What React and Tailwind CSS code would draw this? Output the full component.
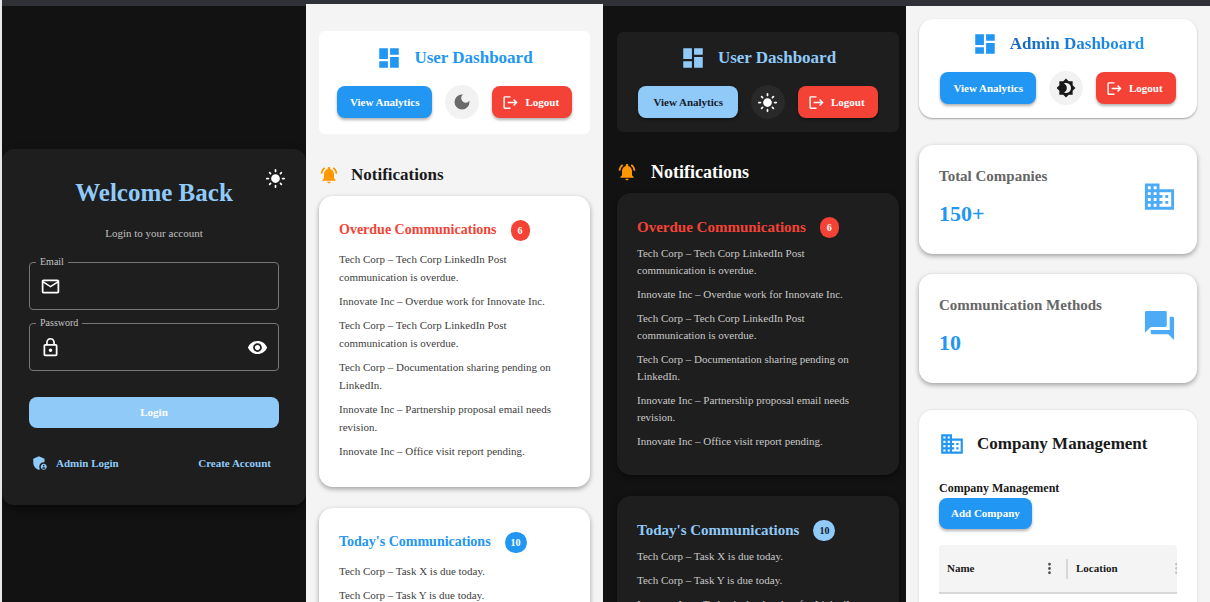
import {
  MdAdminPanelSettings,
  MdBrightness4,
  MdBusiness,
  MdDarkMode,
  MdDashboard,
  MdLightMode,
  MdLockOutline,
  MdLogout,
  MdMoreVert,
  MdNotificationsActive,
  MdOutlineEmail,
  MdQuestionAnswer,
  MdVisibility,
} from "react-icons/md";

const overdue = [
  "Tech Corp – Tech Corp LinkedIn Post communication is overdue.",
  "Innovate Inc – Overdue work for Innovate Inc.",
  "Tech Corp – Tech Corp LinkedIn Post communication is overdue.",
  "Tech Corp – Documentation sharing pending on LinkedIn.",
  "Innovate Inc – Partnership proposal email needs revision.",
  "Innovate Inc – Office visit report pending.",
];

const today = ["Tech Corp – Task X is due today.", "Tech Corp – Task Y is due today."];

function Field({ id, label, type, icon, action }) {
  return (
    <fieldset className="h-[55px] min-w-0 rounded border border-[#777] px-1.5">
      <legend className="h-3.5 px-1 text-[10px] leading-3.5 text-[#c4c4c4]">
        <label htmlFor={id}>{label}</label>
      </legend>
      <div className="flex h-[34px] items-center gap-2 px-1 text-white">
        {icon}
        <input id={id} type={type} className="min-w-0 flex-1 bg-transparent text-sm outline-none" />
        {action}
      </div>
    </fieldset>
  );
}

function Login() {
  return (
    <section className="overflow-hidden border-t-[6px] border-[#303136] bg-[#121212] pt-[143px]">
      <form className="relative rounded-xl bg-[#1e1e1e] px-[27px] pt-7 pb-8 shadow-[0_4px_10px_rgba(0,0,0,0.5)]">
        <button type="button" aria-label="Light mode" className="absolute top-[19px] right-5 text-white">
          <MdLightMode size={21} />
        </button>
        <h1 className="text-center text-[25px] leading-8 font-bold text-[#90caf9]">Welcome Back</h1>
        <p className="mt-3.5 text-center text-[11px] leading-5 text-[#c0c0c0]">Login to your account</p>
        <div className="mt-3 flex flex-col gap-1.5">
          <Field id="email" label="Email" type="email" icon={<MdOutlineEmail size={21} />} />
          <Field
            id="password"
            label="Password"
            type="password"
            icon={<MdLockOutline size={21} />}
            action={
              <button type="button" aria-label="Show password">
                <MdVisibility size={21} />
              </button>
            }
          />
        </div>
        <button
          type="button"
          className="mt-[26px] h-[31px] w-full rounded-lg bg-[#90caf9] text-[11px] font-bold text-white"
        >
          Login
        </button>
        <div className="mt-[25px] flex h-5 items-center justify-between pr-2 pl-0.5 text-[11px] font-bold text-[#90caf9]">
          <a href="#admin" className="flex items-center gap-[7px]">
            <MdAdminPanelSettings size={18} />
            Admin Login
          </a>
          <a href="#create">Create Account</a>
        </div>
      </form>
    </section>
  );
}

function Header({ title, titleClass, iconClass, cardClass, buttonClass, toggleClass, toggleIcon }) {
  return (
    <header className={cardClass}>
      <div className="flex h-7 items-center justify-center gap-3">
        <MdDashboard size={26} className={iconClass} />
        <h2 className={titleClass}>{title}</h2>
      </div>
      <div className="mt-[13px] flex items-center justify-center gap-[13px]">
        <button
          type="button"
          className={`h-8 rounded-lg text-[11px] font-bold whitespace-nowrap shadow-[0_2px_3px_rgba(0,0,0,0.3)] ${buttonClass}`}
        >
          View Analytics
        </button>
        <button
          type="button"
          aria-label="Toggle theme"
          className={`flex size-[34px] items-center justify-center rounded-full ${toggleClass}`}
        >
          {toggleIcon}
        </button>
        <button
          type="button"
          className="flex h-8 items-center gap-1.5 rounded-lg bg-[#f44336] pr-[13px] pl-2.5 text-[11px] font-bold text-white shadow-[0_2px_3px_rgba(0,0,0,0.3)]"
        >
          <MdLogout size={17} />
          Logout
        </button>
      </div>
    </header>
  );
}

function Notice({ title, count, items, className, titleClass, badgeClass, listClass }) {
  return (
    <article className={`rounded-[14px] px-5 pt-5 ${className}`}>
      <div className="flex h-7 items-center gap-3.5">
        <h4 className={`font-bold whitespace-nowrap ${titleClass}`}>{title}</h4>
        <span
          className={`flex h-[21px] min-w-[19px] items-center justify-center rounded-full px-1.5 text-[10px] font-bold ${badgeClass}`}
        >
          {count}
        </span>
      </div>
      <ul className={`flex flex-col text-[11px] ${listClass}`}>
        {items.map((item, i) => (
          <li key={i}>{item}</li>
        ))}
      </ul>
    </article>
  );
}

function LightUser() {
  const card = "bg-white pb-[27px] shadow-[0_2px_5px_rgba(0,0,0,0.35)]";
  const list = "mt-1.5 gap-1.5 leading-[18px] text-[#404040]";
  return (
    <section className="overflow-hidden border-t-4 border-[#303136] bg-[#f4f4f4] px-[13px] pt-[27px]">
      <Header
        title="User Dashboard"
        titleClass="text-[17px] font-bold text-[#2196f3]"
        iconClass="text-[#2196f3]"
        cardClass="rounded-md bg-white pt-[13px] pb-[15px]"
        buttonClass="bg-[#2196f3] px-[13px] text-white"
        toggleClass="bg-[#f2f2f2] text-[#6b6b6b]"
        toggleIcon={<MdDarkMode size={20} />}
      />
      <div className="mt-[26px] flex h-[30px] items-center gap-3">
        <MdNotificationsActive size={20} className="text-[#ff9800]" />
        <h3 className="text-[17px] font-bold text-[#1a1a1a]">Notifications</h3>
      </div>
      <div className="mt-1.5 flex flex-col gap-[21px]">
        <Notice
          title="Overdue Communications"
          count={6}
          items={overdue}
          className={card}
          titleClass="text-sm text-[#f44336]"
          badgeClass="bg-[#f44336] text-white"
          listClass={list}
        />
        <Notice
          title="Today's Communications"
          count={10}
          items={today}
          className={card}
          titleClass="text-sm text-[#2196f3]"
          badgeClass="bg-[#2196f3] text-white"
          listClass={list}
        />
      </div>
    </section>
  );
}

function DarkUser() {
  const card = "bg-[#1e1e1e] pb-[25px] shadow-[0_2px_5px_rgba(0,0,0,0.5)]";
  const list = "mt-1 gap-[7px] pr-4 leading-[17px] text-[#c8c8c8]";
  return (
    <section className="overflow-hidden border-t-[6px] border-[#303136] bg-[#121212] pt-[26px] pr-[7px] pl-3.5">
      <Header
        title="User Dashboard"
        titleClass="text-[17px] font-bold text-[#90caf9]"
        iconClass="text-[#90caf9]"
        cardClass="rounded-md bg-[#1e1e1e] pt-3 pb-[13px]"
        buttonClass="bg-[#90caf9] px-[15px] text-[#15202b]"
        toggleClass="bg-[#292929] text-white"
        toggleIcon={<MdLightMode size={21} />}
      />
      <div className="mt-[25px] flex h-[30px] items-center gap-3.5">
        <MdNotificationsActive size={20} className="text-[#ff9800]" />
        <h3 className="text-lg font-bold text-white">Notifications</h3>
      </div>
      <div className="mt-1.5 flex flex-col gap-[21px]">
        <Notice
          title="Overdue Communications"
          count={6}
          items={overdue}
          className={card}
          titleClass="text-[15px] text-[#f44336]"
          badgeClass="bg-[#f44336] text-white"
          listClass={list}
        />
        <Notice
          title="Today's Communications"
          count={10}
          items={[...today, "Innovate Inc – Today is the due date for LinkedIn."]}
          className={card}
          titleClass="text-[15px] text-[#90caf9]"
          badgeClass="bg-[#90caf9] text-[#15202b]"
          listClass={list}
        />
      </div>
    </section>
  );
}

function Stat({ label, value, icon }) {
  return (
    <article className="flex h-[109px] items-center justify-between rounded-[14px] bg-white px-5 pb-1.5 shadow-[0_2px_5px_rgba(0,0,0,0.35)]">
      <div>
        <h3 className="text-[15px] leading-6 font-bold text-[#666]">{label}</h3>
        <p className="mt-2.5 text-[22px] leading-8 font-bold text-[#2196f3]">{value}</p>
      </div>
      <div className="text-[#4dabf5]">{icon}</div>
    </article>
  );
}

function Admin() {
  return (
    <section className="overflow-hidden border-t-[6px] border-[#303136] bg-[#f4f4f4] px-[13px] pt-[13px]">
      <Header
        title="Admin Dashboard"
        titleClass="bg-linear-to-r from-[#1565c0] to-[#2196f3] bg-clip-text text-[17px] font-bold text-transparent"
        iconClass="text-[#2196f3]"
        cardClass="rounded-[14px] bg-white pt-[11px] pb-[13px] shadow-[0_1px_2px_rgba(0,0,0,0.35)]"
        buttonClass="bg-[#2196f3] px-[13px] text-white"
        toggleClass="bg-[#f2f2f2] text-[#1a1a1a]"
        toggleIcon={<MdBrightness4 size={20} />}
      />
      <div className="mt-[27px] flex flex-col gap-5">
        <Stat label="Total Companies" value="150+" icon={<MdBusiness size={35} />} />
        <Stat label="Communication Methods" value="10" icon={<MdQuestionAnswer size={35} />} />
      </div>
      <article className="mt-[27px] rounded-[14px] bg-white px-5 pt-5 pb-5 shadow-[0_0_3px_rgba(0,0,0,0.12)]">
        <div className="flex h-7 items-center gap-3">
          <MdBusiness size={26} className="text-[#2196f3]" />
          <h3 className="text-[17px] font-bold whitespace-nowrap text-[#1a1a1a]">Company Management</h3>
        </div>
        <h4 className="mt-5 text-xs leading-5 font-bold text-[#1a1a1a]">Company Management</h4>
        <button
          type="button"
          className="h-[31px] rounded-lg bg-[#2196f3] px-3 text-[11px] font-bold text-white shadow-[0_2px_3px_rgba(0,0,0,0.3)]"
        >
          Add Company
        </button>
        <div className="mt-4 overflow-hidden rounded-t">
          <table className="w-full table-fixed text-left text-[11px] text-[#1a1a1a]">
            <thead className="border-b-2 border-[#d8d8d8] bg-[#f4f4f4]">
              <tr className="h-[48px]">
                <th className="w-[127px] pl-2">
                  <div className="flex items-center justify-between pr-2">
                    Name
                    <MdMoreVert size={17} className="text-[#555]" />
                  </div>
                </th>
                <th>
                  <div className="-mr-2 flex h-5 items-center justify-between border-l-2 border-[#d8d8d8] pl-2">
                    Location
                    <MdMoreVert size={17} className="text-[#c4c4c4]" />
                  </div>
                </th>
              </tr>
            </thead>
            <tbody>
              <tr className="h-10">
                <td />
                <td />
              </tr>
            </tbody>
          </table>
        </div>
      </article>
    </section>
  );
}

export default function App() {
  return (
    <main className="grid h-screen grid-cols-[304fr_297fr_303fr_304fr] overflow-hidden bg-[#e8e8e8] pl-0.5 font-['Liberation_Serif',serif]">
      <Login />
      <LightUser />
      <DarkUser />
      <Admin />
    </main>
  );
}
